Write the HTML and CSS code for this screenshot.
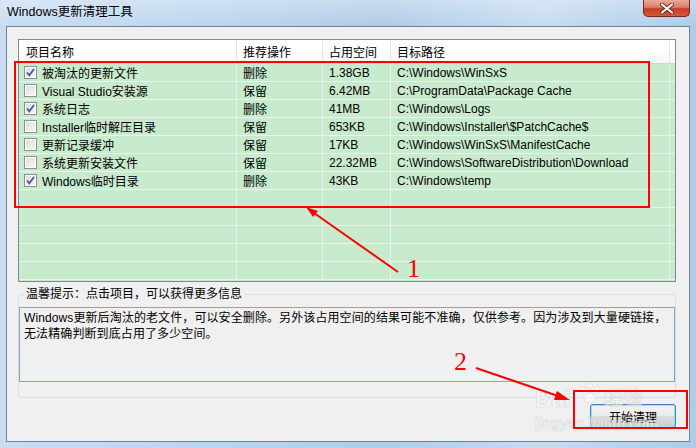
FILE: index.html
```html
<!DOCTYPE html>
<html lang="zh-CN">
<head>
  <meta charset="UTF-8">
  <title>Windows更新清理工具</title>
  <link rel="stylesheet" href="styles.css">
</head>
<body>

  <div class="window">
    <!-- title bar -->
    <div class="titlebar">
      <span class="title">Windows更新清理工具</span>
      <div class="close-btn">
        <svg width="14" height="11" viewBox="0 0 14 11">
          <path d="M2 1.5L12 9.5M12 1.5L2 9.5" stroke="#5b2a22" stroke-width="4" stroke-linecap="round"/>
          <path d="M2 1.5L12 9.5M12 1.5L2 9.5" stroke="#fff" stroke-width="2.2" stroke-linecap="round"/>
        </svg>
      </div>
    </div>

    <div class="client">
      <!-- list view -->
      <div class="listview">
        <div class="lv-row lv-header">
          <div class="cell first">项目名称</div>
          <div class="cell">推荐操作</div>
          <div class="cell">占用空间</div>
          <div class="cell">目标路径</div>
          <div class="cell"></div>
        </div>

        <div class="lv-row">
          <div class="cell first"><span class="check"><svg width="11" height="11" viewBox="0 0 11 11"><path d="M2 5.5l2.3 2.8L9 2" fill="none" stroke="#3d5a9c" stroke-width="1.8"/></svg></span>被淘汰的更新文件</div>
          <div class="cell">删除</div>
          <div class="cell">1.38GB</div>
          <div class="cell">C:\Windows\WinSxS</div>
          <div class="cell"></div>
        </div>
        <div class="lv-row">
          <div class="cell first"><span class="check"></span>Visual Studio安装源</div>
          <div class="cell">保留</div>
          <div class="cell">6.42MB</div>
          <div class="cell">C:\ProgramData\Package Cache</div>
          <div class="cell"></div>
        </div>
        <div class="lv-row">
          <div class="cell first"><span class="check"><svg width="11" height="11" viewBox="0 0 11 11"><path d="M2 5.5l2.3 2.8L9 2" fill="none" stroke="#3d5a9c" stroke-width="1.8"/></svg></span>系统日志</div>
          <div class="cell">删除</div>
          <div class="cell">41MB</div>
          <div class="cell">C:\Windows\Logs</div>
          <div class="cell"></div>
        </div>
        <div class="lv-row">
          <div class="cell first"><span class="check"></span>Installer临时解压目录</div>
          <div class="cell">保留</div>
          <div class="cell">653KB</div>
          <div class="cell">C:\Windows\Installer\$PatchCache$</div>
          <div class="cell"></div>
        </div>
        <div class="lv-row">
          <div class="cell first"><span class="check"></span>更新记录缓冲</div>
          <div class="cell">保留</div>
          <div class="cell">17KB</div>
          <div class="cell">C:\Windows\WinSxS\ManifestCache</div>
          <div class="cell"></div>
        </div>
        <div class="lv-row">
          <div class="cell first"><span class="check"></span>系统更新安装文件</div>
          <div class="cell">保留</div>
          <div class="cell">22.32MB</div>
          <div class="cell">C:\Windows\SoftwareDistribution\Download</div>
          <div class="cell"></div>
        </div>
        <div class="lv-row">
          <div class="cell first"><span class="check"><svg width="11" height="11" viewBox="0 0 11 11"><path d="M2 5.5l2.3 2.8L9 2" fill="none" stroke="#3d5a9c" stroke-width="1.8"/></svg></span>Windows临时目录</div>
          <div class="cell">删除</div>
          <div class="cell">43KB</div>
          <div class="cell">C:\Windows\temp</div>
          <div class="cell"></div>
        </div>

        <!-- empty rows -->
        <div class="lv-row"><div class="cell"></div><div class="cell"></div><div class="cell"></div><div class="cell"></div><div class="cell"></div></div>
        <div class="lv-row"><div class="cell"></div><div class="cell"></div><div class="cell"></div><div class="cell"></div><div class="cell"></div></div>
        <div class="lv-row"><div class="cell"></div><div class="cell"></div><div class="cell"></div><div class="cell"></div><div class="cell"></div></div>
        <div class="lv-row"><div class="cell"></div><div class="cell"></div><div class="cell"></div><div class="cell"></div><div class="cell"></div></div>
        <div class="lv-row"><div class="cell"></div><div class="cell"></div><div class="cell"></div><div class="cell"></div><div class="cell"></div></div>
      </div>

      <!-- tips group -->
      <fieldset class="tips">
        <legend>温馨提示：点击项目，可以获得更多信息</legend>
        <div class="desc">Windows更新后淘汰的老文件，可以安全删除。另外该占用空间的结果可能不准确，仅供参考。因为涉及到大量硬链接，<br>无法精确判断到底占用了多少空间。</div>
      </fieldset>

      <button class="start-btn">开始清理</button>
    </div>
  </div>

  <!-- red annotations + watermark drawn over the screenshot -->
  <svg class="overlay" width="696" height="448" viewBox="0 0 696 448">
    <g class="watermark">
      <text x="535" y="407" font-size="23">Bai</text>
      <circle cx="583" cy="389" r="2.5"/><circle cx="590" cy="386" r="2.5"/><circle cx="597" cy="389" r="2.5"/>
      <ellipse cx="590" cy="398" rx="6" ry="5"/>
      <text x="604" y="405" font-size="19">经验</text>
      <text x="535" y="428" font-size="14">jingyan.baidu.com</text>
    </g>
    <rect x="15" y="62" width="634" height="145" fill="none" stroke="#f00" stroke-width="2"/>
    <line x1="398" y1="272" x2="314" y2="213" stroke="#f00" stroke-width="2"/>
    <polygon points="306,207 318,211 313,217" fill="#f00"/>
    <text x="407" y="277" class="mark">1</text>
    <text x="454" y="370" class="mark">2</text>
    <line x1="476" y1="368" x2="558" y2="396" stroke="#f00" stroke-width="2"/>
    <polygon points="570,400 554,400 557,391" fill="#f00"/>
    <rect x="574" y="391" width="113" height="37" fill="none" stroke="#f00" stroke-width="2"/>
  </svg>

</body>
</html>
```

FILE: styles.css
```css
/* reset & basic */
* { box-sizing: border-box; margin: 0; padding: 0; }
body {
  position: relative;
  width: 696px;
  height: 448px;
  overflow: hidden;
  font-family: "Liberation Sans", "Noto Sans CJK SC", sans-serif;
  font-size: 12px;
  color: #000;
}

/* aero window frame */
.window {
  width: 696px;
  height: 448px;
  display: flex;
  flex-direction: column;
  padding: 0 6px 6px 6px;
  background:
    linear-gradient(180deg, rgba(255,255,255,0.3), rgba(255,255,255,0) 26px),
    linear-gradient(90deg, #c8ddf2 0%, #bcd5ee 30%, #b0cce9 55%, #c6dcf1 78%, #aecbe8 100%);
}
.titlebar {
  height: 26px;
  flex-shrink: 0;
  display: flex;
  align-items: flex-start;
}
.title {
  padding: 4px 0 0 1px;
  font-size: 12.5px;
  line-height: 16px;
}
.close-btn {
  margin-left: auto;
  width: 47px;
  height: 17px;
  display: flex;
  align-items: center;
  justify-content: center;
  border: 1px solid #6b2d24;
  border-top: none;
  border-radius: 0 0 5px 5px;
  background: linear-gradient(180deg, #e9a99a 0%, #dc7e69 45%, #c73d22 55%, #d4593c 100%);
}

/* client area */
.client {
  flex: 1;
  display: flex;
  flex-direction: column;
  padding: 12px 13px 0 11px;
  background: #f0f0f0;
  border: 1px solid #6f8397;
}

/* list view */
.listview {
  height: 243px;
  flex-shrink: 0;
  overflow: hidden;
  border: 1px solid #828790;
  background: #c8ebcd;
}
.lv-row {
  display: grid;
  grid-template-columns: 218px 86px 68px 279px 1fr;
  height: 18px;
  border-bottom: 1px solid #eef2ee;
}
.cell {
  display: flex;
  align-items: center;
  padding-left: 6px;
  white-space: nowrap;
  overflow: hidden;
  border-right: 1px solid #eef2ee;
}
.cell.first { padding-left: 5px; }
.lv-header {
  height: 24px;
  background: linear-gradient(180deg, #ffffff 0%, #ffffff 50%, #f4f5f7 100%);
  border-bottom: 1px solid #d5d5d5;
}
.lv-header .cell { border-right-color: #e3e5e8; }
.lv-header .cell.first { padding-left: 7px; }

.check {
  width: 13px;
  height: 13px;
  margin-right: 5px;
  flex-shrink: 0;
  display: flex;
  align-items: center;
  justify-content: center;
  border: 1px solid #8e8f8f;
  background: linear-gradient(135deg, #d9dcdf 0%, #f6f6f6 100%);
  box-shadow: inset 0 0 0 1px #fff;
}

/* tips group */
.tips {
  margin-top: 5px;
  padding: 6px 0 15px 0;
  min-width: 0;
  border: 1px solid #d5dfe5;
  border-radius: 3px;
}
.tips legend {
  margin-left: 5px;
  padding: 0 2px;
  line-height: 14px;
}
.desc {
  height: 75px;
  padding: 2px 4px;
  line-height: 16px;
  letter-spacing: 0.1px;
  white-space: nowrap;
  border: 1px solid #8ba4bd;
  background: #f0f0f0;
}

/* start button */
.start-btn {
  align-self: flex-end;
  width: 86px;
  height: 24px;
  margin-top: 6px;
  font-family: "Liberation Sans", "Noto Sans CJK SC", sans-serif;
  font-size: 12px;
  color: #000;
  border: 1px solid #3c85b8;
  border-radius: 3px;
  box-shadow: inset 0 0 0 1px #9fdcf7;
  background: linear-gradient(180deg, #f3f3f3 0%, #ebebeb 48%, #dcdcdc 52%, #cfcfcf 100%);
}

/* annotations */
.overlay {
  position: absolute;
  top: 0;
  left: 0;
  pointer-events: none;
}
.mark {
  font-family: "Liberation Serif", serif;
  font-size: 26px;
  fill: #f00;
}
.watermark {
  font-family: "Liberation Sans", "Noto Sans CJK SC", sans-serif;
  font-weight: bold;
  fill: #fff;
  fill-opacity: 0.5;
  stroke: #c8c8c8;
  stroke-width: 0.7;
  stroke-opacity: 0.6;
}
```
